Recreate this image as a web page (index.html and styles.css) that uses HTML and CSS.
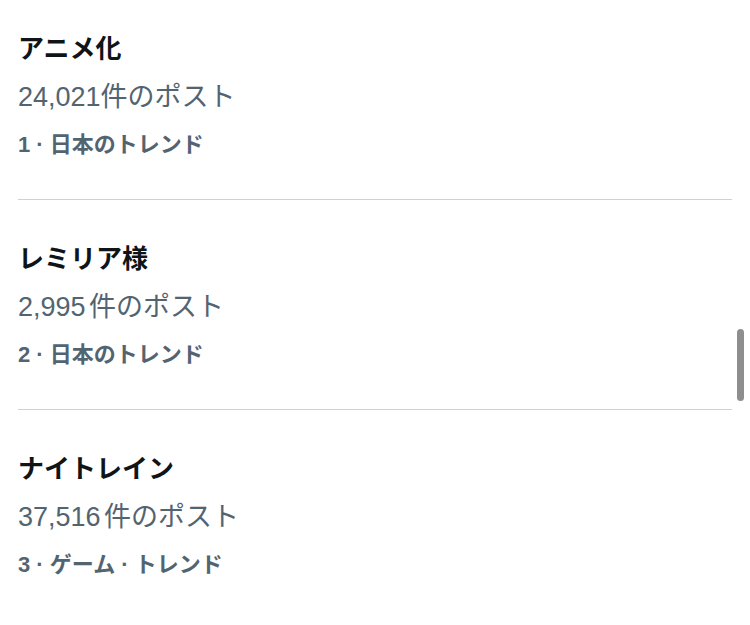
FILE: index.html
```html
<!DOCTYPE html>
<html lang="ja">
<head>
<meta charset="utf-8">
<link rel="stylesheet" href="styles.css">
</head>
<body>
<div class="page">
  <ul class="trends">
    <li class="trend">
      <div class="title">アニメ化</div>
      <div class="count">24,021件のポスト</div>
      <div class="meta">1 · 日本のトレンド</div>
    </li>
    <li class="trend">
      <div class="title">レミリア様</div>
      <div class="count">2,995 件のポスト</div>
      <div class="meta">2 · 日本のトレンド</div>
    </li>
    <li class="trend">
      <div class="title">ナイトレイン</div>
      <div class="count">37,516 件のポスト</div>
      <div class="meta">3 · ゲーム · トレンド</div>
    </li>
  </ul>
  <div class="scroll-thumb"></div>
</div>
</body>
</html>
```
FILE: styles.css
```css
html, body {
  margin: 0;
  padding: 0;
  background: #ffffff;
}
body {
  font-family: "Liberation Sans", "Noto Sans CJK JP", sans-serif;
  width: 750px;
  height: 625px;
  overflow: hidden;
}
.page {
  position: relative;
  height: 625px;
}
.trends {
  list-style: none;
  margin: 0;
  padding: 0 18px;
}
.trend {
  padding: 43px 0 38px;
  border-bottom: 1px solid #d1d1d1;
  display: flex;
  flex-direction: column;
  gap: 16px;
}
.trend:first-child {
  padding-top: 33px;
}
.trend:last-child {
  border-bottom: none;
}
.title {
  font-size: 26px;
  line-height: 32px;
  font-weight: 700;
  color: #0f1419;
}
.count {
  font-size: 27px;
  line-height: 32px;
  font-weight: 400;
  color: #536471;
  word-spacing: -4px;
}
.meta {
  font-size: 22px;
  line-height: 32px;
  font-weight: 700;
  color: #536471;
}
.scroll-thumb {
  position: absolute;
  left: 737px;
  top: 329px;
  width: 7px;
  height: 72px;
  border-radius: 4px;
  background: #8e8e8e;
}
```
